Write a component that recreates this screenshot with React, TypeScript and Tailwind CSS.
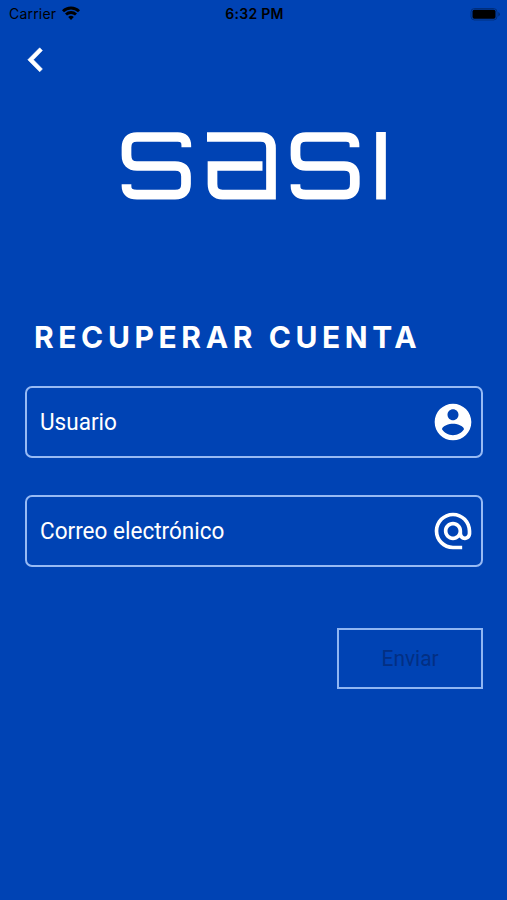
/**
 * RecoverAccount
 * Mobile account recovery screen with user and e-mail fields.
 */

import type { ReactNode } from 'react';
import { MdAlternateEmail } from 'react-icons/md';

function StatusBar() {
  return (
    <header className="grid h-7 grid-cols-3 items-center pl-[9px] pr-[7px] font-['Inter',sans-serif] text-black">
      <div className="flex items-center gap-[6px]">
        <span className="text-[14px] leading-7 tracking-[0.2px]">Carrier</span>
        <svg viewBox="0 0 18 14" className="-mt-[3px] h-[14px] w-[18px]" fill="none" stroke="currentColor" strokeWidth="2.9">
          <path d="M1 5.2a11.6 11.6 0 0 1 16 0" />
          <path d="M4 8.5a7.3 7.3 0 0 1 10 0" />
          <path d="M9 14l-2.800-2.900a4 4 0 0 1 5.600 0z" fill="currentColor" stroke="none" />
        </svg>
      </div>
      <span className="whitespace-nowrap text-center text-[14px] font-semibold leading-7 tracking-[0.3px]">6:32 PM</span>
      <svg viewBox="0 0 30 14" className="-mt-px h-[14px] w-[30px] justify-self-end">
        <rect x="1" y="1.500" width="26" height="11.500" rx="3.500" fill="none" stroke="#000" strokeOpacity="0.3" />
        <rect x="2.500" y="2.700" width="23" height="9" rx="1.800" />
        <path d="M28.300 5v4.500q1.600-.7 1.600-2.250T28.300 5z" fillOpacity="0.350" />
      </svg>
    </header>
  );
}

function Logo() {
  return (
    <svg viewBox="0 0 266 68" className="h-[68px] w-[266px]" fill="none" stroke="#fff" strokeWidth="9.7" role="img" aria-label="sasi">
      <path d="M65.300 15.200v-1.700Q65.300 5 56.800 5H16Q5.500 5 5.500 15.500V23Q5.500 34 16 34H54Q65 34 65 44.500V52Q65 62.600 54 62.600H16Q5.500 62.600 5.500 54V52.300" />
      <path d="M86 5H139.500Q150 5 150 16V62.600H101.500Q91.500 62.600 91.500 52V34H141.500" />
      <path d="M233.500 15.200v-1.700Q233.500 5 225 5H185Q174.500 5 174.500 15.500V23Q174.500 34 185 34H223Q233.800 34 233.800 44.500V52Q233.800 62.600 223 62.600H185Q174.500 62.600 174.500 54V52.300" />
      <path d="M260 0V67.500" />
    </svg>
  );
}

function BackIcon() {
  return (
    <svg viewBox="0 0 24 24" className="size-[48px]" fill="currentColor" stroke="currentColor" strokeWidth="0.3" strokeLinejoin="round">
      <path d="M15.200 7.300L13.850 5.900 7.900 11.900l5.950 6 1.350-1.400-4.500-4.600z" />
    </svg>
  );
}

function AccountIcon() {
  return (
    <svg viewBox="0 0 24 24" className="size-[44px]" fill="currentColor">
      <path d="M12 2C6.480 2 2 6.480 2 12s4.480 10 10 10 10-4.480 10-10S17.520 2 12 2zm0 3c1.660 0 3 1.340 3 3s-1.340 3-3 3-3-1.340-3-3 1.340-3 3-3zm0 14.200c-2.500 0-4.710-1.280-6-3.220.03-1.990 4-3.080 6-3.080 1.990 0 5.970 1.090 6 3.080-1.290 1.940-3.500 3.220-6 3.220z" />
    </svg>
  );
}

function Field({ label, icon }: { label: string; icon: ReactNode }) {
  return (
    <div className="flex h-[72px] items-center justify-between rounded-[7px] border-2 border-[#97baf4] pl-[13px] pr-[6px]">
      <span className="origin-left scale-x-[0.92] text-[24.5px]">{label}</span>
      {icon}
    </div>
  );
}

export default function App() {
  return (
    <div className="flex h-[900px] w-[507px] flex-col overflow-hidden bg-[#0043b4] font-['Roboto',sans-serif] text-white">
      <StatusBar />
      <button className="ml-[12px] mt-[8px] size-[48px]" aria-label="Atrás">
        <BackIcon />
      </button>

      <div className="mt-[48px] pl-[121px]">
        <Logo />
      </div>

      <main className="mt-[116px] flex flex-col pl-[25px] pr-[24px]">
        <h1 className="whitespace-nowrap pl-[9px] font-['Inter',sans-serif] text-[30px] font-bold leading-[42px] tracking-[4.6px]">RECUPERAR CUENTA</h1>

        <div className="mt-[28px] flex flex-col gap-[37px]">
          <Field label="Usuario" icon={<AccountIcon />} />
          <Field label="Correo electrónico" icon={<MdAlternateEmail className="size-[44px]" />} />
        </div>

        <button className="mt-[61px] h-[61px] w-[146px] self-end border-2 border-[#8fb5f2] text-[22px] text-[#032f83]" disabled>
          <span className="inline-block scale-x-[0.95]">Enviar</span>
        </button>
      </main>
    </div>
  );
}
